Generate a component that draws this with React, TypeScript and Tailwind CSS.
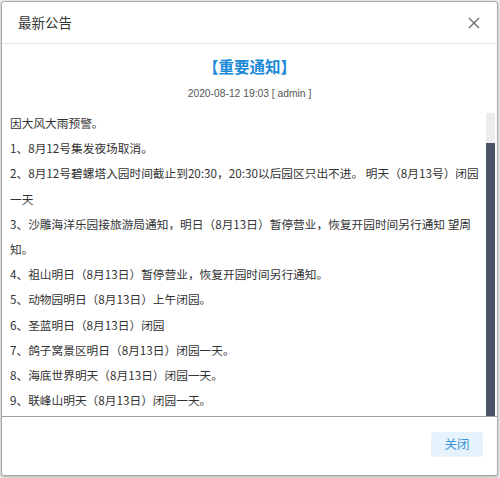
import React from 'react'

const lines = [
  '因大风大雨预警。',
  '1、8月12号集发夜场取消。',
  '2、8月12号碧螺塔入园时间截止到20:30，20:30以后园区只出不进。 明天（8月13号）闭园',
  '一天',
  '3、沙雕海洋乐园接旅游局通知，明日（8月13日）暂停营业，恢复开园时间另行通知 望周',
  '知。',
  '4、祖山明日（8月13日）暂停营业，恢复开园时间另行通知。',
  '5、动物园明日（8月13日）上午闭园。',
  '6、圣蓝明日（8月13日）闭园',
  '7、鸽子窝景区明日（8月13日）闭园一天。',
  '8、海底世界明天（8月13日）闭园一天。',
  '9、联峰山明天（8月13日）闭园一天。',
]

export default function App() {
  return (
    <div className="w-[500px] h-[478px] bg-[#ececec] pt-[1px] pl-[1px] pr-[2px] pb-[2px] font-['Noto_Sans_CJK_SC',sans-serif]">
      <div className="h-full flex flex-col bg-white border border-[#a9a9a9] rounded-[3px] shadow-[0_1px_3px_rgba(0,0,0,0.25)] overflow-hidden">
        {/* header */}
        <div className="h-[42px] shrink-0 flex items-center justify-between pl-[16px] pr-[16px] border-b border-[#e6e6e6]">
          <span className="text-[13.5px] text-[#333] leading-none">最新公告</span>
          <svg width="12" height="12" viewBox="0 0 12 12" className="mr-[1px]">
            <path d="M1 1 L11 11 M11 1 L1 11" stroke="#666" strokeWidth="1.2" fill="none" />
          </svg>
        </div>

        {/* title block */}
        <div className="shrink-0 flex flex-col items-center pt-[11px]">
          <h1 className="text-[15.5px] leading-[22px] font-bold text-[#1b8ad8]">【重要通知】</h1>
          <p className="mt-[10px] text-[10.3px] leading-[14px] text-[#555] font-['Liberation_Sans',sans-serif]">2020-08-12 19:03 [ admin ]</p>
        </div>

        {/* scroll area */}
        <div className="mt-[9px] h-[307px] shrink-0 flex border-b border-[#a0a0a0]">
          <div className="flex-1 overflow-hidden pl-[8px]">
            {lines.map((l, i) => (
              <div key={i} className="whitespace-nowrap text-[11.7px] leading-[25.2px] text-[#333]">{l}</div>
            ))}
          </div>
          <div className="w-[9px] mr-[2px] mt-[3px] flex flex-col">
            <div className="h-[30px] bg-[#ececec]" />
            <div className="flex-1 bg-[#4b5468]" />
          </div>
        </div>

        {/* footer */}
        <div className="flex-1 flex justify-end items-start pt-[15px] pr-[14px]">
          <button className="w-[52px] h-[25px] bg-[#e7f3fc] text-[#3c93d6] text-[12.5px] leading-none rounded-[2px]">关闭</button>
        </div>
      </div>
    </div>
  )
}
